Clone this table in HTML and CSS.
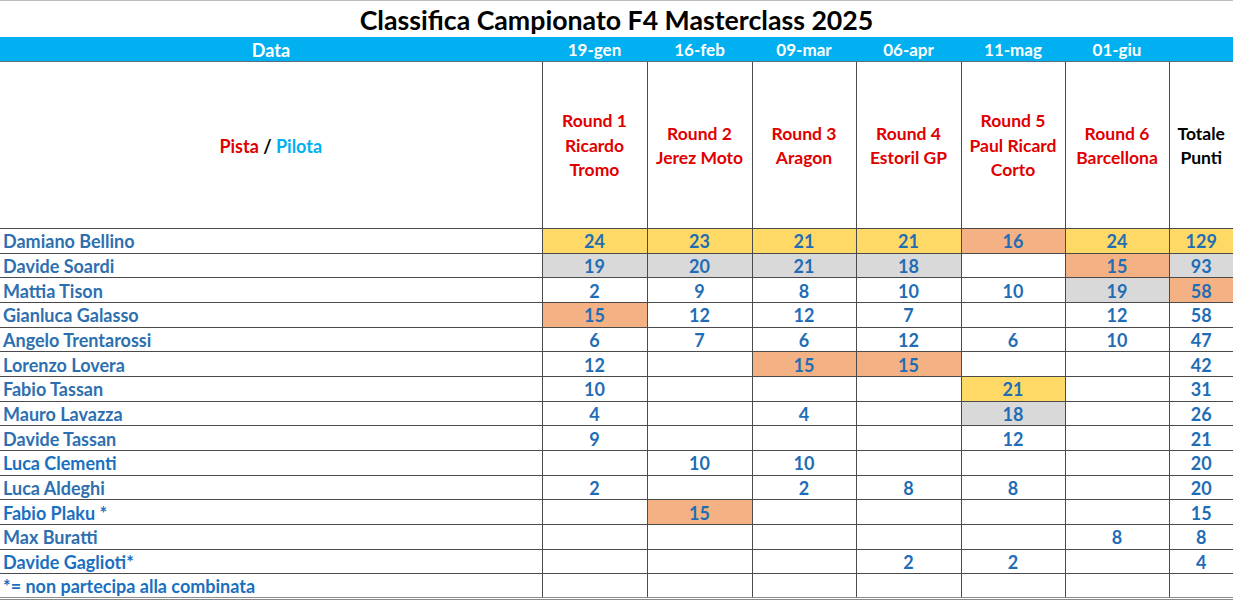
FILE: index.html
```html
<!DOCTYPE html>
<html lang="it">
<head>
<meta charset="utf-8">
<title>Classifica Campionato F4 Masterclass 2025</title>
<link rel="stylesheet" href="styles.css">
</head>
<body>
<div class="sheet">
  <div class="title">Classifica Campionato F4 Masterclass 2025</div>
  <table class="grid">
    <colgroup>
      <col class="c-name"><col class="c-r"><col class="c-r"><col class="c-r3"><col class="c-r"><col class="c-r3"><col class="c-r3"><col class="c-tot">
    </colgroup>
    <thead>
      <tr class="dates">
        <th>Data</th><th>19-gen</th><th>16-feb</th><th>09-mar</th><th>06-apr</th><th>11-mag</th><th>01-giu</th><th></th>
      </tr>
      <tr class="rounds">
        <th class="pp"><span class="red">Pista</span> <span class="blk">/</span> <span class="cyan">Pilota</span></th>
        <th>Round 1<br>Ricardo<br>Tromo</th>
        <th>Round 2<br>Jerez Moto</th>
        <th>Round 3<br>Aragon</th>
        <th>Round 4<br>Estoril GP</th>
        <th>Round 5<br>Paul Ricard<br>Corto</th>
        <th>Round 6<br>Barcellona</th>
        <th class="tot">Totale<br>Punti</th>
      </tr>
    </thead>
    <tbody>
      <tr><td class="name">Damiano Bellino</td><td class="y">24</td><td class="y">23</td><td class="y">21</td><td class="y">21</td><td class="o">16</td><td class="y">24</td><td class="y">129</td></tr>
      <tr><td class="name">Davide Soardi</td><td class="g">19</td><td class="g">20</td><td class="g">21</td><td class="g">18</td><td></td><td class="o">15</td><td class="g">93</td></tr>
      <tr><td class="name">Mattia Tison</td><td>2</td><td>9</td><td>8</td><td>10</td><td>10</td><td class="g">19</td><td class="o">58</td></tr>
      <tr><td class="name">Gianluca Galasso</td><td class="o">15</td><td>12</td><td>12</td><td>7</td><td></td><td>12</td><td>58</td></tr>
      <tr><td class="name">Angelo Trentarossi</td><td>6</td><td>7</td><td>6</td><td>12</td><td>6</td><td>10</td><td>47</td></tr>
      <tr><td class="name">Lorenzo Lovera</td><td>12</td><td></td><td class="o">15</td><td class="o">15</td><td></td><td></td><td>42</td></tr>
      <tr><td class="name">Fabio Tassan</td><td>10</td><td></td><td></td><td></td><td class="y">21</td><td></td><td>31</td></tr>
      <tr><td class="name">Mauro Lavazza</td><td>4</td><td></td><td>4</td><td></td><td class="g">18</td><td></td><td>26</td></tr>
      <tr><td class="name">Davide Tassan</td><td>9</td><td></td><td></td><td></td><td>12</td><td></td><td>21</td></tr>
      <tr><td class="name bright">Luca Clementi</td><td></td><td>10</td><td>10</td><td></td><td></td><td></td><td>20</td></tr>
      <tr><td class="name">Luca Aldeghi</td><td>2</td><td></td><td>2</td><td>8</td><td>8</td><td></td><td>20</td></tr>
      <tr><td class="name bright">Fabio Plaku *</td><td></td><td class="o">15</td><td></td><td></td><td></td><td></td><td>15</td></tr>
      <tr><td class="name">Max Buratti</td><td></td><td></td><td></td><td></td><td></td><td>8</td><td>8</td></tr>
      <tr><td class="name bright">Davide Gaglioti*</td><td></td><td></td><td></td><td>2</td><td>2</td><td></td><td>4</td></tr>
      <tr class="last"><td class="name bright">*= non partecipa alla combinata</td><td></td><td></td><td></td><td></td><td></td><td></td><td></td></tr>
    </tbody>
  </table>
</div>
</body>
</html>
```
FILE: styles.css
```css
html, body {
  margin: 0;
  padding: 0;
  background: #ffffff;
  overflow: hidden;
}
.sheet {
  width: 1233px;
  font-family: Lato, "Open Sans", sans-serif;
  font-weight: 700;
  border-top: 1px solid #bdbdbd;
}
.title {
  height: 36px;
  line-height: 38px;
  text-align: center;
  font-size: 26.7px;
  color: #000;
}
.grid {
  border-collapse: collapse;
  table-layout: fixed;
  width: 1233px;
  font-size: 18px;
}
.c-name { width: 542px; }
.c-r { width: 105px; }
.c-r3 { width: 104px; }
.c-tot { width: 64px; }

.dates th {
  background: #00b0f0;
  color: #ffffff;
  padding: 2px 0 0;
  font-size: 17px;
  border-bottom: 1px solid #5a6e78;
  text-align: center;
  vertical-align: middle;
  line-height: 22px;
}
.dates th:first-child { font-size: 18px; }
.rounds th {
  height: 167px;
  padding: 2px 0 0;
  box-sizing: border-box;
  color: #e00000;
  font-size: 17.5px;
  line-height: 24.5px;
  text-align: center;
  vertical-align: middle;
  border: 1px solid #4a4a4a;
  border-top: none;
  white-space: nowrap;
}
.rounds th:first-child { border-left: none; font-size: 18px; }
.rounds th.tot { color: #000; border-right: none; }
.red { color: #e00000; }
.blk { color: #000; }
.cyan { color: #00b0f0; }

tbody tr { height: 24.67px; }
tbody td {
  padding: 1px 0 0;
  border: 1px solid #4a4a4a;
  text-align: center;
  vertical-align: middle;
  color: #1f6db5;
  line-height: 20px;
  white-space: nowrap;
}
tbody td:first-child { border-left: none; }
tbody td:last-child { border-right: none; }
tbody td.name {
  text-align: left;
  padding-left: 3px;
  color: #2e6fb0;
}
tbody td.name.bright { color: #1a70c0; }
tbody tr.last td { border-bottom: 3px double #8a8a8a; }
.y { background: #ffd966; }
.g { background: #d9d9d9; }
.o { background: #f4b183; }
```
